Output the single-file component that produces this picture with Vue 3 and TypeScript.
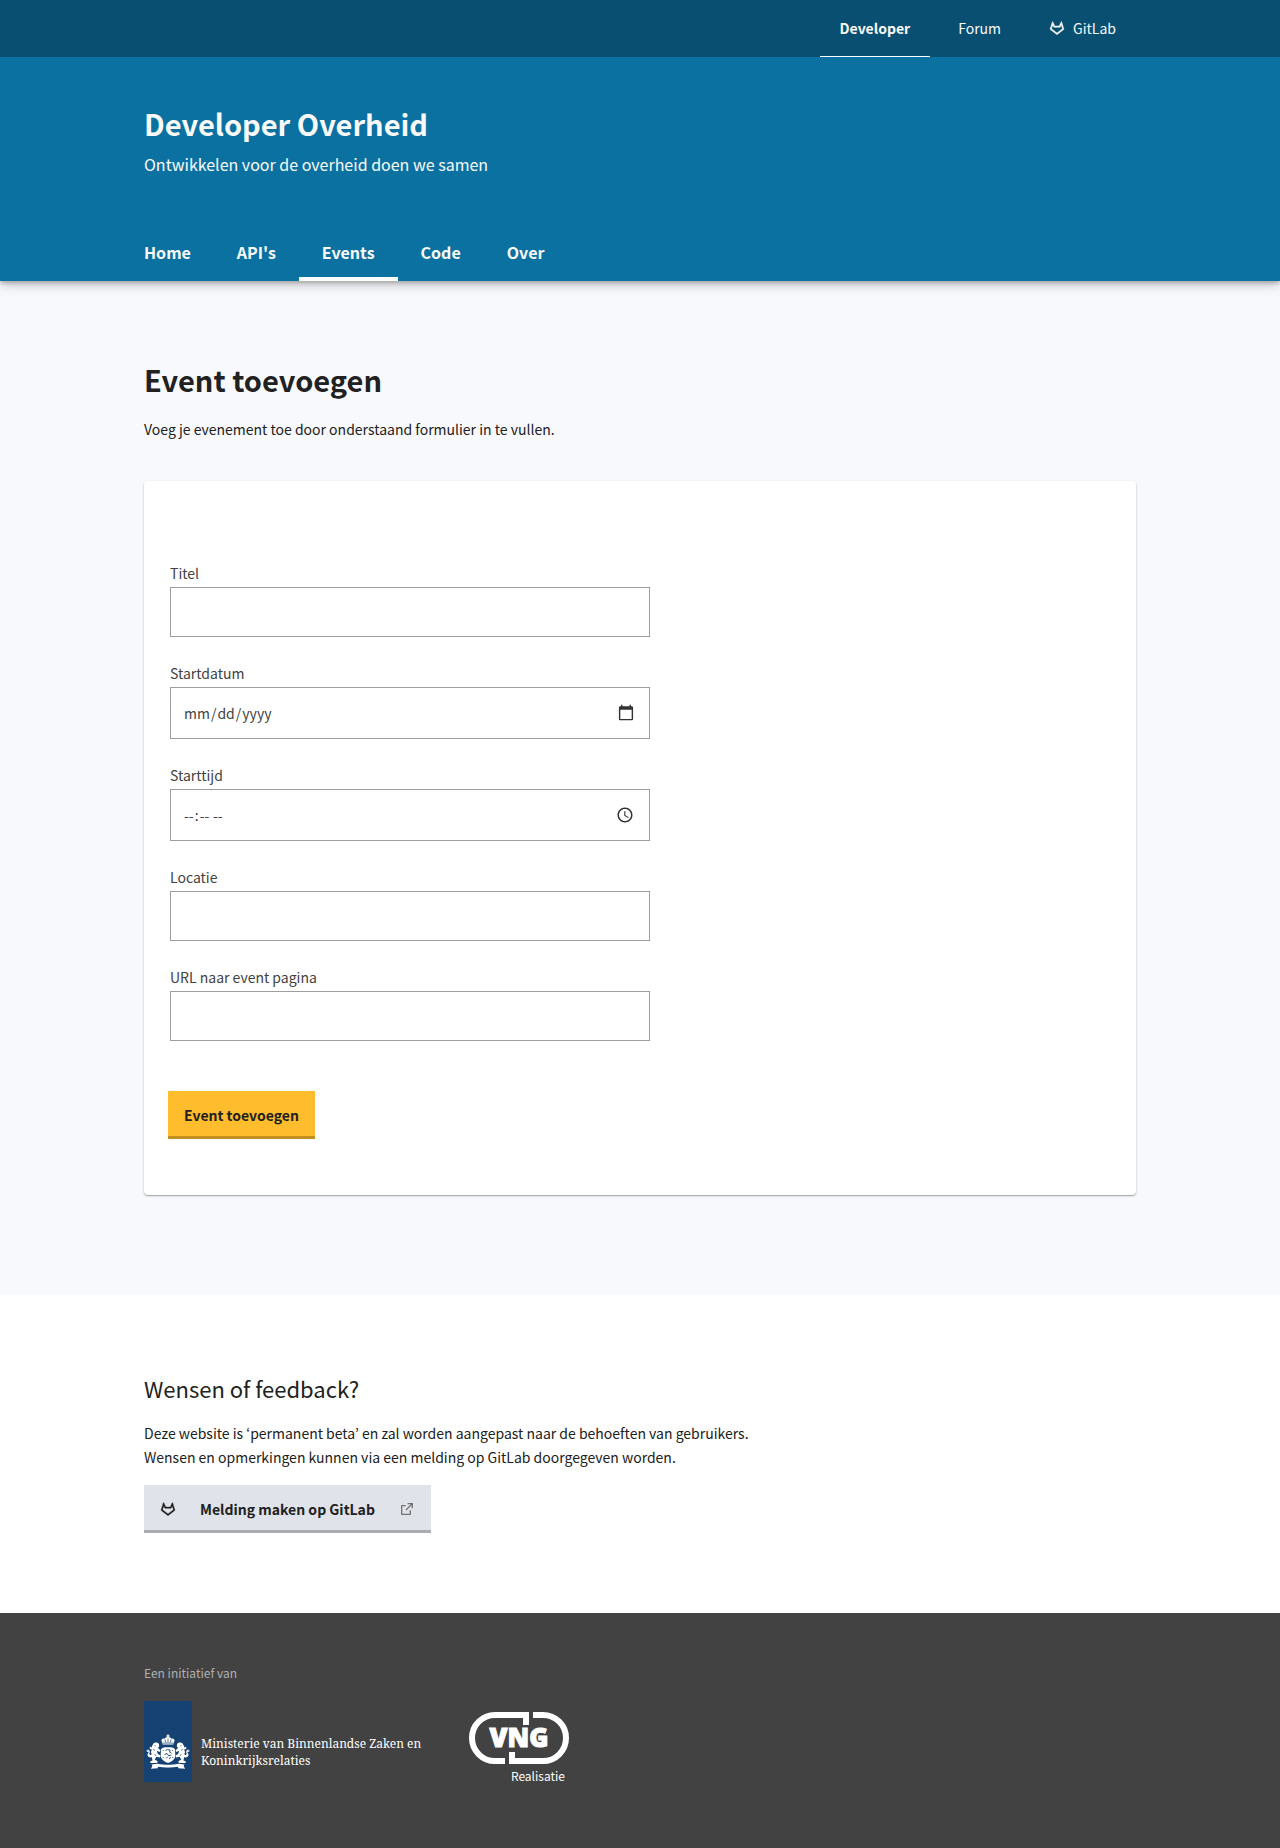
<script setup lang="ts">
import { ref } from 'vue'

interface Field {
  id: string
  label: string
  type: string
}

const siteNav: string[] = ['Home', "API's", 'Events', 'Code', 'Over']
const activeNav = ref<string>('Events')

const fields: Field[] = [
  { id: 'title', label: 'Titel', type: 'text' },
  { id: 'start-date', label: 'Startdatum', type: 'date' },
  { id: 'start-time', label: 'Starttijd', type: 'time' },
  { id: 'location', label: 'Locatie', type: 'text' },
  { id: 'url', label: 'URL naar event pagina', type: 'url' },
]

const form = ref<Record<string, string>>({})

const gitlabPath =
  'M5.68 7.314l-1.82 5.914L12 19.442l8.14-6.214-1.82-5.914L16.643 11H7.356L5.681 7.314zM15.357 9l2.888-6.354a.4.4 0 0 1 .747.048l3.367 10.945a.5.5 0 0 1-.174.544L12 21.958 1.816 14.183a.5.5 0 0 1-.174-.544L5.009 2.694a.4.4 0 0 1 .747-.048L8.644 9h6.712z'
</script>

<template>
  <div class="page">
    <header class="header">
      <div class="topbar">
        <nav class="container topnav" aria-label="Sites">
          <a href="#" class="toplink active">Developer</a>
          <a href="#" class="toplink">Forum</a>
          <a href="#" class="toplink">
            <svg class="icon gitlab" viewBox="0 0 24 24" aria-hidden="true"><path :d="gitlabPath" /></svg>
            GitLab
          </a>
        </nav>
      </div>
      <div class="container masthead">
        <p class="site-title">Developer Overheid</p>
        <p class="site-subtitle">Ontwikkelen voor de overheid doen we samen</p>
        <nav class="sitenav" aria-label="Hoofdmenu">
          <a
            v-for="item in siteNav"
            :key="item"
            href="#"
            class="sitelink"
            :class="{ active: item === activeNav }"
            @click.prevent="activeNav = item"
          >{{ item }}</a>
        </nav>
      </div>
    </header>

    <main class="main">
      <div class="container">
        <h1 class="page-title">Event toevoegen</h1>
        <p class="intro">Voeg je evenement toe door onderstaand formulier in te vullen.</p>
        <form class="card" @submit.prevent>
          <div v-for="field in fields" :key="field.id" class="field">
            <label :for="field.id">{{ field.label }}</label>
            <input :id="field.id" v-model="form[field.id]" :type="field.type" />
          </div>
          <button type="submit" class="button primary">Event toevoegen</button>
        </form>
      </div>
    </main>

    <section class="feedback">
      <div class="container">
        <h2>Wensen of feedback?</h2>
        <p>
          Deze website is ‘permanent beta’ en zal worden aangepast naar de behoeften van gebruikers.<br />
          Wensen en opmerkingen kunnen via een melding op GitLab doorgegeven worden.
        </p>
        <a href="#" class="button secondary">
          <svg class="icon gitlab" viewBox="0 0 24 24" aria-hidden="true"><path :d="gitlabPath" /></svg>
          Melding maken op GitLab
          <svg class="icon external" viewBox="0 0 24 24" aria-hidden="true">
            <path d="M10 6v2H5v11h11v-5h2v6a1 1 0 0 1-1 1H4a1 1 0 0 1-1-1V7a1 1 0 0 1 1-1h6zm11-3v8h-2V6.413l-7.793 7.794-1.414-1.414L17.585 5H13V3h8z" />
          </svg>
        </a>
      </div>
    </section>

    <footer class="footer">
      <div class="container">
        <p class="initiative">Een initiatief van</p>
        <div class="logos">
          <a href="#" class="ministry">
            <svg class="emblem" viewBox="0 0 48 81" aria-hidden="true">
              <rect width="48" height="81" fill="#154273" />
              <g fill="#fff">
                <path d="M23.3 33.4h1.4v1.2h1v1h-1v1.2h-1.4v-1.2h-1v-1h1z" />
                <path d="M18.6 43.6l-1.1-3.9c-.3-1.5 1.4-2.6 3-2 .6-1.1 1.9-1.5 3.5-1.5s2.9.4 3.5 1.5c1.6-.6 3.3.5 3 2l-1.1 3.9z" />
                <path d="M17 48.2c1-1.2 2.6-2 4.4-2h5.200c1.800 0 3.400.8 4.400 2l.3 6.200c0 3.400-3.300 6.200-7.300 7.400-4-1.200-7.300-4-7.300-7.400z" />
                <path d="M9.600 42.300c1.300-1.300 4.200-1.200 5.200.6.9 1.700.2 3.100-.9 4.200l2.600 2.200-.9 1.800-2.900-1.300 1.200 3.300 2.600 1.500-.5 1.800-3.600-.6-1.700 2.700 3 1.800-.6 1.700H6.600l-.5-1.600 2.400-.9-.6-3.200c-2.200.6-4.300-.6-4.400-2.400-.1-1.600 1.200-2.100 1.200-3.200-1.400.5-2.400-.2-2.400-1.200l1.500.1-.5-1.200c1.700-.2 2.900 1.300 2.500 2.900-.3 1.200-.7 1.900 0 2.500.6.5 1.500.1 1.900-.6l-.8-2.200.9-2.200-2.200-1.200.3-1.800 1.700.6.400-1.500z" />
                <path d="M38.400 42.300c-1.300-1.300-4.200-1.200-5.200.6-.9 1.700-.2 3.100.9 4.200l-2.600 2.200.9 1.800 2.900-1.300-1.200 3.300-2.600 1.500.5 1.800 3.600-.6 1.700 2.700-3 1.800.6 1.700h6.500l.5-1.600-2.400-.9.6-3.200c2.200.6 4.300-.6 4.400-2.400.1-1.600-1.200-2.100-1.200-3.200 1.400.5 2.400-.2 2.400-1.200l-1.500.1.5-1.200c-1.700-.2-2.900 1.300-2.500 2.900.3 1.200.7 1.900 0 2.500-.6.5-1.500.1-1.900-.6l.8-2.200-.9-2.200 2.200-1.200-.3-1.800-1.700.6-.4-1.500z" />
                <path d="M7.500 63.400l6.200-.6c6 1.300 14.600 1.300 20.600 0l6.200.6-.9 1.700 1.500 2.600-6.900-.5v-1.500c-5.800 1-14.600 1-20.400 0v1.500l-6.900.5 1.500-2.600z" />
              </g>
              <g fill="none" stroke="#154273">
                <path stroke-width=".7" d="M18.300 42.100h11.400M21 38.500l.7 3M24 37.500v4M27 38.500l-.7 3" />
                <path stroke-width=".9" d="M21.500 49.500l2-1 2.600.6-.6 2 2 1.200M20.500 53.500l2.500-1 1.600 2.200 2.700-.6M22 57.500l1.800-1.800M25.500 58.200l.8-2.200M19.200 49v.9M28.700 49v.9M19.200 56v.9M28.700 56v.9" />
                <path stroke-width=".6" d="M10.400 44.500l1.400.4M37.600 44.500l-1.400.4M9 48l2 1.500M39 48l-2 1.500M10.500 53l1.500 2M37.500 53l-1.500 2" />
              </g>
            </svg>
            <span class="ministry-name">Ministerie van Binnenlandse Zaken en<br />Koninkrijksrelaties</span>
          </a>
          <a href="#" class="vng">
            <svg class="vng-logo" viewBox="0 0 100 70" role="img" aria-label="VNG Realisatie">
              <g fill="none" stroke="#fff" stroke-width="6">
                <path d="M57 13V3H26A23 23 0 0 0 26 49H36" />
                <path d="M64 3H74A23 23 0 0 1 74 49H43V40" />
              </g>
              <text class="vng-text" x="50" y="35" text-anchor="middle">VNG</text>
              <text class="vng-sub" x="96" y="69" text-anchor="end">Realisatie</text>
            </svg>
          </a>
        </div>
      </div>
    </footer>
  </div>
</template>

<style>
body {
  margin: 0;
  background: #424242;
}
</style>

<style scoped>
.page {
  font-family: "Source Sans Pro", "Noto Sans CJK JP", sans-serif;
  font-size: 14px;
  line-height: 24px;
  color: #212121;
}

h1,
h2,
p {
  margin: 0;
}

a {
  color: inherit;
  text-decoration: none;
}

.container {
  box-sizing: border-box;
  width: calc(100% - 48px);
  max-width: 992px;
  margin: 0 auto;
}

.icon {
  width: 16px;
  height: 16px;
  flex: none;
  fill: currentColor;
}

.gitlab {
  stroke: currentColor;
  stroke-width: 0.6;
}

.header {
  position: relative;
  background: #0b71a1;
  color: #fafafa;
  box-shadow: 0 2px 4px rgba(0, 0, 0, 0.2), 0 3px 12px rgba(0, 0, 0, 0.24);
}

.topbar {
  background: #084f71;
}

.topnav {
  display: flex;
  justify-content: flex-end;
  gap: 8px;
}

.toplink {
  display: flex;
  align-items: center;
  gap: 8px;
  height: 56px;
  padding: 0 20px;
  border-bottom: 1px solid transparent;
}

.toplink.active {
  font-weight: 600;
  border-bottom-color: #fff;
}

.masthead {
  padding-top: 46px;
}

.site-title {
  font-size: 29px;
  font-weight: 700;
  line-height: 40px;
}

.site-subtitle {
  margin-top: 9px;
  font-size: 16px;
}

.sitenav {
  display: flex;
  margin: 49px 0 0 -23px;
}

.sitelink {
  padding: 15px 23px 13px;
  border-bottom: 4px solid transparent;
  font-size: 16px;
  font-weight: 600;
}

.sitelink.active {
  border-bottom-color: #fff;
}

.main {
  padding: 78px 0 100px;
  background: #f8f9fd;
}

.page-title {
  font-size: 29px;
  line-height: 40px;
}

.intro {
  margin: 18px 0 40px;
}

.card {
  padding: 80px 24px 56px;
  border-radius: 4px;
  background: #fff;
  box-shadow: 0 1px 1px rgba(0, 0, 0, 0.24), 0 1px 3px rgba(0, 0, 0, 0.16);
}

.field {
  display: flex;
  flex-direction: column;
  gap: 2px;
  max-width: 480px;
  margin: 0 2px 24px;
  color: #424242;
}

.field input {
  box-sizing: border-box;
  height: 50px;
  padding: 0 12px;
  border: 1px solid #9e9e9e;
  border-radius: 0;
  background: #fff;
  color: inherit;
  font: inherit;
}

.field input[type='date'],
.field input[type='time'] {
  height: 52px;
}

.field input::-webkit-calendar-picker-indicator {
  width: 18px;
  height: 18px;
  opacity: 0.8;
}

.button {
  display: inline-flex;
  align-items: center;
  box-sizing: border-box;
  height: 48px;
  padding: 2px 16px 0;
  border: 0;
  border-bottom: 3px solid rgba(0, 0, 0, 0.24);
  border-radius: 0;
  color: #212121;
  font: inherit;
  font-weight: 600;
}

.primary {
  display: flex;
  margin-top: 50px;
  background: #ffbc2c;
}

.secondary {
  gap: 24px;
  margin-top: 16px;
  background: #e0e3ea;
}

.external {
  fill: #757575;
}

.feedback {
  display: flex;
  padding: 77px 0 80px;
  background: #fff;
}

.feedback h2 {
  margin-bottom: 17px;
  font-size: 22px;
  font-weight: 400;
  line-height: 32px;
}

.footer {
  padding: 48px 0 66px;
  background: #424242;
}

.initiative {
  margin-bottom: 16px;
  font-size: 12px;
  color: #b0b0b0;
}

.logos {
  display: flex;
  flex-wrap: wrap;
  align-items: flex-end;
  gap: 48px;
  color: #fff;
}

.ministry {
  display: flex;
  align-items: flex-end;
  gap: 9px;
}

.emblem {
  width: 48px;
  height: 81px;
}

.ministry-name {
  padding-bottom: 13px;
  font-family: "Noto Serif", "Liberation Serif", serif;
  font-size: 12px;
  line-height: 17px;
}

.vng-logo {
  display: block;
  width: 100px;
  height: 70px;
  overflow: visible;
}

.vng-text {
  fill: #fff;
  stroke: #fff;
  stroke-width: 1;
  font-family: "Open Sans", sans-serif;
  font-size: 26px;
  font-weight: 800;
}

.vng-sub {
  fill: #fff;
  font-size: 12px;
}
</style>
